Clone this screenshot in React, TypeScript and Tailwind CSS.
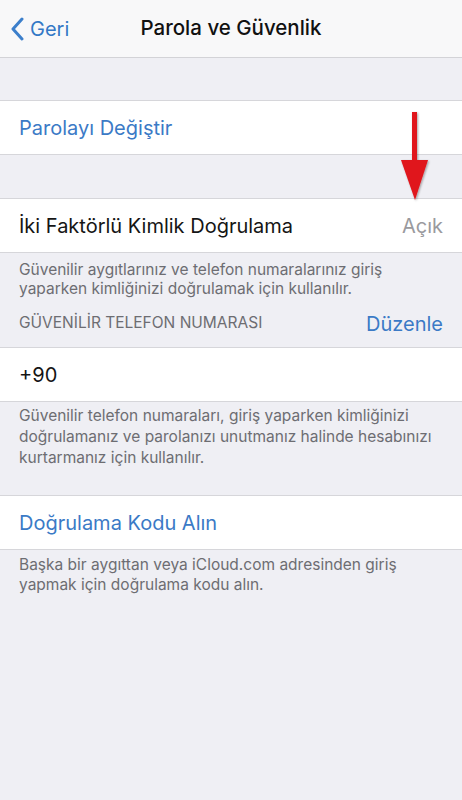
import React from "react";

const font = { fontFamily: "Inter, 'Liberation Sans', sans-serif" };

function Row({ children }: { children: React.ReactNode }) {
  return (
    <div className="flex h-[55px] items-center justify-between border-y border-[#d6d6da] bg-white px-[19px] text-[20px]">
      {children}
    </div>
  );
}

export default function App() {
  return (
    <div className="relative min-h-[800px] w-[462px] bg-[#efeff4]" style={font}>
      {/* Nav bar */}
      <div className="relative flex h-[58px] items-center justify-center border-b border-[#d3d3d7] bg-[#f8f8f9]">
        <div className="absolute left-[10px] top-0 flex h-full items-center gap-[6px] text-[#3478c6]">
          <svg width="14" height="24" viewBox="0 0 14 24" fill="none">
            <path d="M12 2L3 12l9 10" stroke="#3c7fcb" strokeWidth="3" strokeLinecap="round" strokeLinejoin="round" />
          </svg>
          <span className="text-[20px]">Geri</span>
        </div>
        <span className="text-[20.5px] font-medium text-[#111]">Parola ve Güvenlik</span>
      </div>

      <div className="h-[42px]" />
      <Row>
        <span className="text-[#3b7ac6]">Parolayı Değiştir</span>
      </Row>

      <div className="h-[43px]" />
      <Row>
        <span className="text-[#151515]">İki Faktörlü Kimlik Doğrulama</span>
        <span className="text-[#9a9a9e]">Açık</span>
      </Row>

      <div className="px-[19px] pt-[7px] text-[15.5px] leading-[19px] text-[#6d6d72]">
        Güvenilir aygıtlarınız ve telefon numaralarınız giriş yaparken kimliğinizi doğrulamak için kullanılır.
      </div>
      <div className="flex items-end justify-between px-[19px] pt-[11px] pb-[8px]">
        <span className="pb-[5px] text-[15.5px] text-[#6d6d72]">GÜVENİLİR TELEFON NUMARASI</span>
        <span className="text-[20px] text-[#3b7ac6]">Düzenle</span>
      </div>
      <Row>
        <span className="text-[#151515]">+90</span>
      </Row>
      <div className="px-[19px] pt-[3px] text-[15.5px] leading-[21px] text-[#6d6d72]">
        Güvenilir telefon numaraları, giriş yaparken kimliğinizi doğrulamanız ve parolanızı unutmanız halinde hesabınızı kurtarmanız için kullanılır.
      </div>

      <div className="h-[27px]" />
      <Row>
        <span className="text-[#3b7ac6]">Doğrulama Kodu Alın</span>
      </Row>
      <div className="px-[19px] pt-[5px] text-[15.5px] leading-[20px] text-[#6d6d72]">
        Başka bir aygıttan veya iCloud.com adresinden giriş yapmak için doğrulama kodu alın.
      </div>

      {/* Red arrow overlay */}
      <svg className="absolute left-[398px] top-[110px]" width="34" height="94" viewBox="0 0 34 94">
        <defs>
          <filter id="sh" x="-50%" y="-50%" width="200%" height="200%">
            <feDropShadow dx="1" dy="1" stdDeviation="1.2" floodColor="#000" floodOpacity="0.35" />
          </filter>
        </defs>
        <g filter="url(#sh)">
          <rect x="14" y="2" width="5" height="50" fill="#e0141b" />
          <path d="M3 50 L30 50 L17 90 Z" fill="#e0141b" />
        </g>
      </svg>
    </div>
  );
}
